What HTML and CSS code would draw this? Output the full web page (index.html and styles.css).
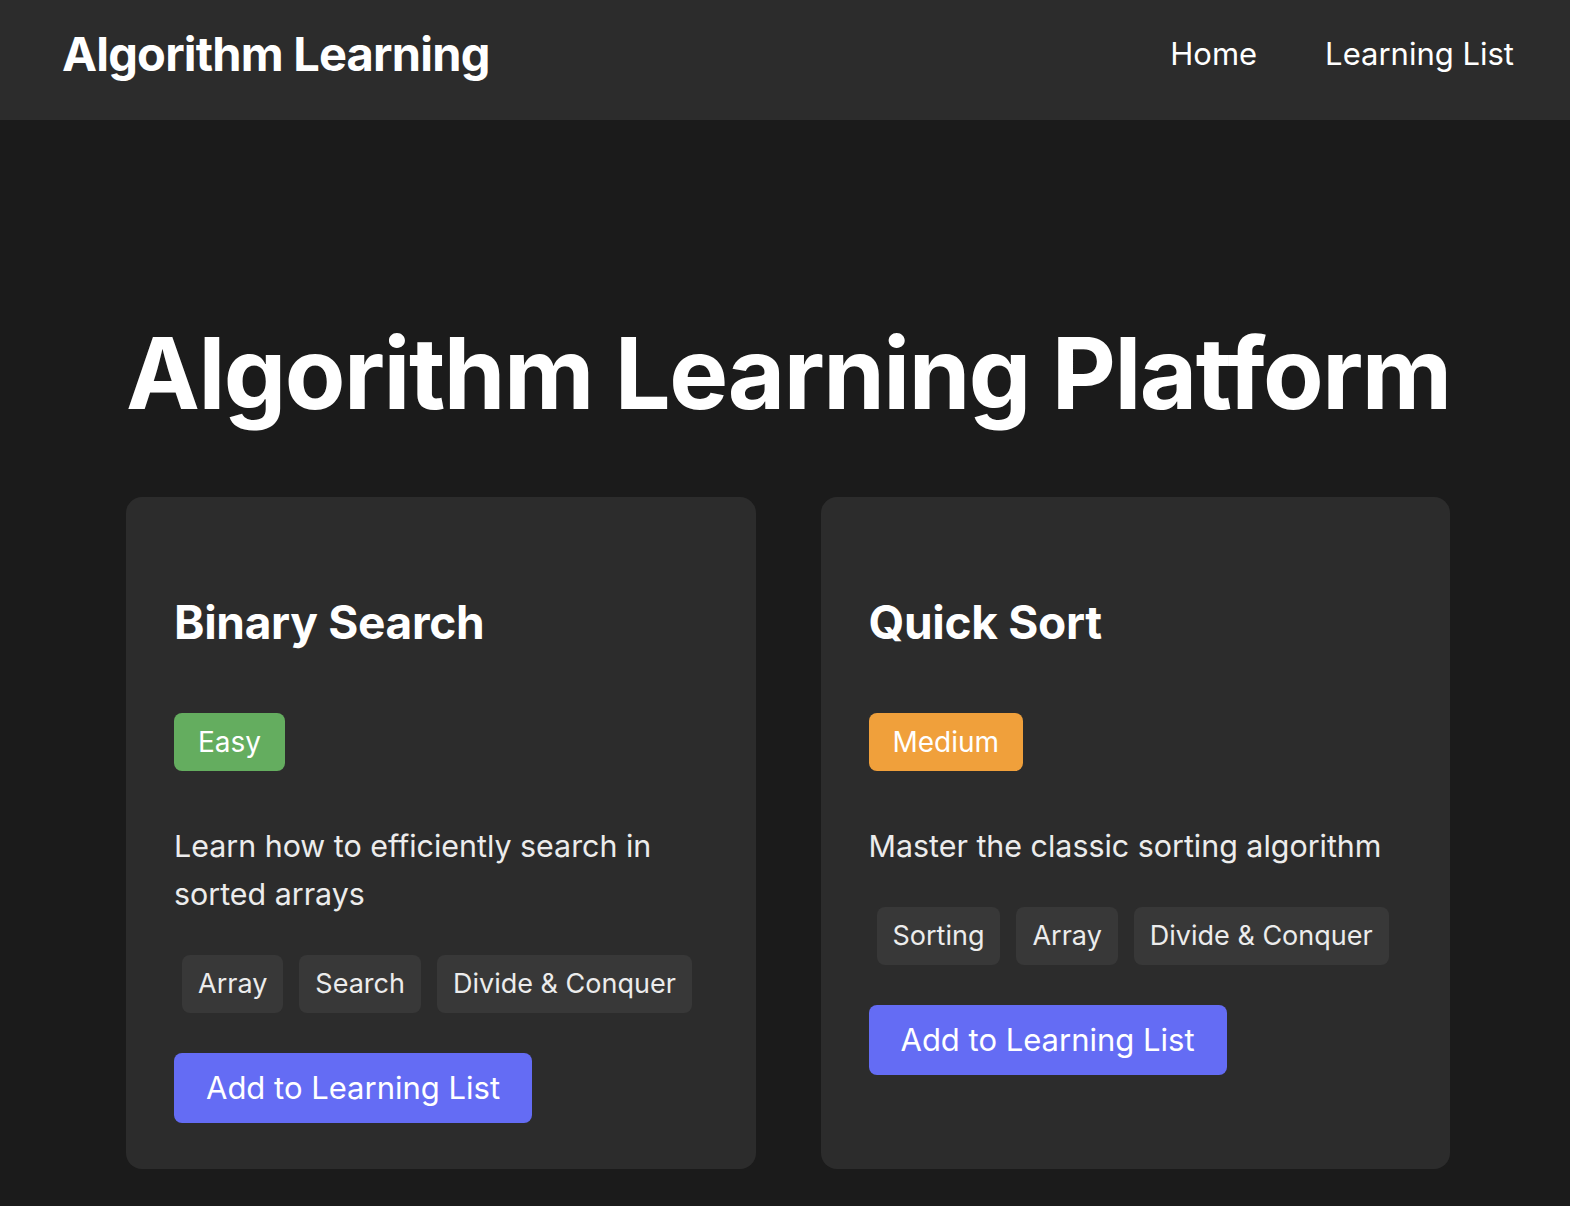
FILE: index.html
```html
<!DOCTYPE html>
<html lang="en">
<head>
<meta charset="utf-8">
<title>Algorithm Learning</title>
<link rel="stylesheet" href="styles.css">
</head>
<body>
<nav class="navbar">
  <a class="logo" href="#">Algorithm Learning</a>
  <div class="nav-links">
    <a href="#">Home</a>
    <a href="#">Learning List</a>
  </div>
</nav>
<main class="main">
  <h1 class="hero-title">Algorithm Learning Platform</h1>
  <div class="cards">
    <div class="card">
      <h3 class="card-title">Binary Search</h3>
      <div class="difficulty-row"><span class="badge badge-easy">Easy</span></div>
      <p class="card-desc">Learn how to efficiently search in sorted arrays</p>
      <div class="tags">
        <span class="tag">Array</span>
        <span class="tag">Search</span>
        <span class="tag">Divide &amp; Conquer</span>
      </div>
      <div class="actions"><button class="btn">Add to Learning List</button></div>
    </div>
    <div class="card">
      <h3 class="card-title">Quick Sort</h3>
      <div class="difficulty-row"><span class="badge badge-medium">Medium</span></div>
      <p class="card-desc">Master the classic sorting algorithm</p>
      <div class="tags">
        <span class="tag">Sorting</span>
        <span class="tag">Array</span>
        <span class="tag">Divide &amp; Conquer</span>
      </div>
      <div class="actions"><button class="btn">Add to Learning List</button></div>
    </div>
  </div>
</main>
</body>
</html>
```
FILE: styles.css
```css
* { box-sizing: border-box; }

body {
  margin: 0;
  background: #1b1b1b;
  color: #ffffff;
  font-family: Inter, "Noto Sans", sans-serif;
}

a { color: inherit; text-decoration: none; }

.navbar {
  height: 120px;
  background: #2c2c2c;
  display: flex;
  align-items: center;
  justify-content: space-between;
  padding: 0 56px 14px 62px;
}

.logo {
  font-size: 47px;
  font-weight: 700;
  letter-spacing: -0.8px;
}

.nav-links {
  display: flex;
  gap: 68px;
  font-size: 31px;
}

.main {
  padding: 195px 120px 40px 126px;
}

.hero-title {
  margin: 0 0 66px;
  text-align: center;
  font-size: 99px;
  font-weight: 700;
  line-height: 116px;
  letter-spacing: -1.5px;
  white-space: nowrap;
}

.cards {
  display: grid;
  grid-template-columns: 1fr 1fr;
  gap: 65px;
}

.card {
  background: #2c2c2c;
  border-radius: 16px;
  padding: 48px 44px 46px 48px;
}

.card-title {
  margin: 48px 0 0;
  font-size: 46px;
  font-weight: 700;
  line-height: 58px;
  letter-spacing: -0.3px;
}

.difficulty-row {
  display: flex;
  margin-top: 62px;
}

.badge {
  font-size: 28px;
  line-height: 34px;
  padding: 12px 24px;
  border-radius: 8px;
  color: #ffffff;
}

.badge-easy { background: #64ad5f; }
.badge-medium { background: #f0a03b; }

.card-desc {
  margin: 51px 0 0;
  font-size: 30.4px;
  line-height: 48px;
  color: #ececec;
}

.tags {
  display: flex;
  flex-wrap: wrap;
  margin-top: 29px;
}

.tag {
  margin: 8px;
  background: #383838;
  color: #ececec;
  font-size: 27px;
  line-height: 34px;
  padding: 12px 16px;
  border-radius: 8px;
}

.actions {
  margin-top: 32px;
  display: flex;
}

.btn {
  font-family: inherit;
  font-size: 31px;
  line-height: 38px;
  padding: 16px 32px;
  border: none;
  border-radius: 8px;
  background: #646cf4;
  color: #ffffff;
}
```
